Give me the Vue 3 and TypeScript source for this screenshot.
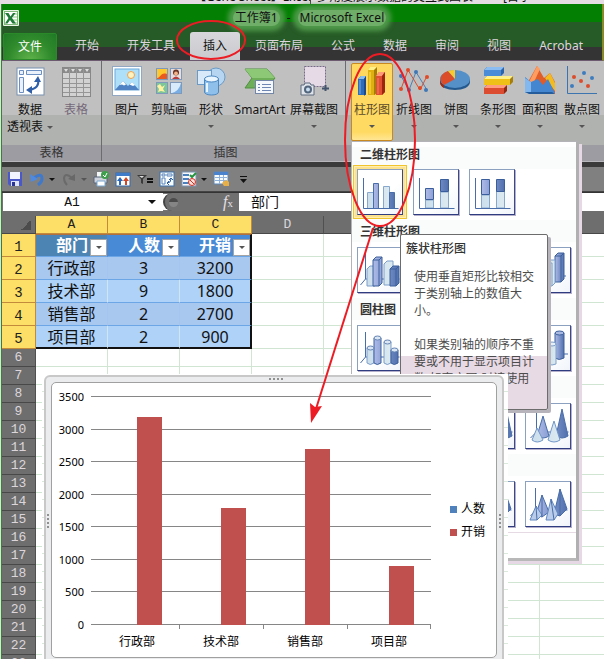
<script setup lang="ts">
import { ref } from 'vue'

interface Command {
  id: string
  label: string
  second?: string
  arrow?: boolean
  width: string
  disabled?: boolean
}
interface Group {
  name: string
  cls: string
  items: Command[]
}

const activeTab = ref('插入')
const nameBox = ref('A1')
const formula = ref('部门')

const tabs: string[] = ['开始', '开发工具', '插入', '页面布局', '公式', '数据', '审阅', '视图', 'Acrobat']

const groups: Group[] = [
  {
    name: '表格',
    cls: 'g-table',
    items: [
      { id: 'pivot', label: '数据', second: '透视表', arrow: true, width: 'w56' },
      { id: 'table', label: '表格', width: 'w36', disabled: true },
    ],
  },
  {
    name: '插图',
    cls: 'g-illus',
    items: [
      { id: 'picture', label: '图片', width: 'w42' },
      { id: 'clip', label: '剪贴画', width: 'w42' },
      { id: 'shapes', label: '形状', arrow: true, width: 'w42' },
      { id: 'smart', label: 'SmartArt', width: 'w56' },
      { id: 'shot', label: '屏幕截图', arrow: true, width: 'w52' },
    ],
  },
  {
    name: '',
    cls: 'g-chart',
    items: [
      { id: 'column', label: '柱形图', arrow: true, width: 'w42' },
      { id: 'line', label: '折线图', arrow: true, width: 'w42' },
      { id: 'pie', label: '饼图', arrow: true, width: 'w42' },
      { id: 'hbar', label: '条形图', arrow: true, width: 'w42' },
      { id: 'area', label: '面积图', arrow: true, width: 'w42' },
      { id: 'scatter', label: '散点图', arrow: true, width: 'w42' },
    ],
  },
]

const columns: string[] = ['A', 'B', 'C', 'D', 'E', 'F', 'G', 'H']
const fields: string[] = ['部门', '人数', '开销']
const records: string[][] = [
  ['行政部', '3', '3200'],
  ['技术部', '9', '1800'],
  ['销售部', '2', '2700'],
  ['项目部', '2', '900'],
]
const emptyRows: number[] = Array.from({ length: 18 }, (_, i) => i + 6)

interface Section {
  title: string
  tiles: string[]
}
const sections: Section[] = [
  { title: '二维柱形图', tiles: ['cluster', 'stack', 'full'] },
  { title: '三维柱形图', tiles: ['cube', 'cube', 'cube', 'cubeRow'] },
  { title: '圆柱图', tiles: ['cyl', 'cyl', 'cyl', 'cylRow'] },
  { title: '', tiles: ['cone', 'cone', 'cone', 'cone'] },
  { title: '', tiles: ['pyr', 'pyr', 'pyr', 'pyr'] },
]

const ticks: number[] = [3500, 3000, 2500, 2000, 1500, 1000, 500, 0]
const baseline = 242
const scaleY = (v: number): number => Math.round(baseline - (v * 228) / 3500)
const barX: number[] = [85, 169, 253, 337]
</script>

<template>
  <div class="page">
    <div class="behind" aria-hidden="true">
      <span class="b1">【Gene Sheet】Excel</span>
      <span class="b2">多角度展示数据的交互式图表</span>
      <span class="b3">[首字</span>
    </div>
    <div class="window">
      <header class="top">
        <div class="titlebar">
          <svg class="logo" width="16" height="16" viewBox="0 0 16 16">
            <rect width="16" height="16" rx="1" fill="#e9f3e6" />
            <rect x="1.500" y="1.500" width="13" height="13" fill="#fff" stroke="#7fb878" />
            <path d="M10 4h4M10 7h4M10 10h4M10 13h4" stroke="#8fca86" />
            <path d="M2 3h3.500l2 3.500L10 3h2.500L9 8l4 5.500H9.500L7 10l-2.500 3.500H2L5.500 8z" fill="#1f7a37" />
          </svg>
          <h1><span class="glow">工作簿1</span><span>-</span><span class="glow">Microsoft Excel</span></h1>
        </div>
        <nav class="tabs">
          <button type="button" class="file">文件</button>
          <button v-for="t in tabs" :key="t" type="button" class="tab" :class="{ active: t === activeTab }" @click="activeTab = t">{{ t }}</button>
        </nav>
      </header>

      <div class="ribbon">
        <section v-for="g in groups" :key="g.cls" class="group" :class="g.cls">
          <div class="commands">
            <button v-for="c in g.items" :key="c.id" type="button" class="cmd" :class="[c.width, { open: c.id === 'column' }]" :disabled="c.disabled">
              <svg width="32" height="32" viewBox="0 0 32 32">
                <g v-if="c.id === 'pivot'">
                  <rect x="3" y="3" width="27" height="27" fill="#fff" stroke="#7590b0" />
                  <path d="M5.500 5.500h4v4h-4zM12.500 5.500h15v4h-15zM5.500 12.500h4v15h-4z" fill="#eaf1fa" stroke="#6b8fc0" />
                  <path d="M24 15q2 8-9 10" fill="none" stroke="#2f5fa8" stroke-width="2" />
                  <path d="M24 11l-4 6h7zM12 25l6-4v8z" fill="#2f5fa8" />
                </g>
                <g v-else-if="c.id === 'table'">
                  <rect x="2.500" y="2.500" width="28" height="29" fill="#d2d2d2" stroke="#888" />
                  <rect x="3" y="3" width="27" height="5" fill="#8a8a8a" />
                  <path d="M9.500 3v28M16.500 3v28M23.500 3v28M3 13.500h27M3 18.500h27M3 22.500h27M3 27.500h27" stroke="#969696" />
                  <path d="M4 4h4l-2 3zM11 4h4l-2 3zM18 4h4l-2 3zM25 4h4l-2 3z" fill="#ddd" />
                </g>
                <g v-else-if="c.id === 'picture'">
                  <rect x="1.500" y="1.500" width="29" height="29" fill="#fff" stroke="#92a8c2" />
                  <rect x="4" y="4" width="24" height="21" fill="#aee0fa" stroke="#6da8d8" />
                  <circle cx="20" cy="10" r="3.500" fill="#fff3c0" stroke="#f0a050" />
                  <path d="M4 25l8-9 5 5 4-4 7 8z" fill="#4f83c4" />
                  <path d="M8.500 20l3.500-4 3 3.500-2 1-2-1zM18.500 19.500L21 17l3 3-2 1z" fill="#fff" />
                </g>
                <g v-else-if="c.id === 'clip'">
                  <rect x="3.500" y="3.500" width="11" height="11" fill="#ffc72e" stroke="#7f99ba" />
                  <path d="M4 13c4 0 3-6 10-4v5H4z" fill="#e85a20" />
                  <rect x="17.500" y="3.500" width="11" height="11" fill="#e8dfdc" stroke="#7f99ba" />
                  <circle cx="23" cy="7.500" r="3" fill="#6a3424" /><circle cx="23" cy="8.500" r="2" fill="#f2b488" />
                  <path d="M19 14q4-5 8 0z" fill="#b83c3c" />
                  <rect x="3.500" y="17.500" width="11" height="11" fill="#7cc69a" stroke="#7f99ba" />
                  <path d="M7 19l2 3 3-2-2 4 2 3-4-1-3 1 1-3-2-3z" fill="#fff3a0" />
                  <rect x="17.500" y="17.500" width="11" height="11" fill="#d8ebfa" stroke="#7f99ba" />
                  <path d="M28 18v10H19q7-2 9-10z" fill="#78aee4" />
                </g>
                <g v-else-if="c.id === 'shapes'">
                  <circle cx="21" cy="12" r="9" fill="#b5d5f0" stroke="#6a9bc8" />
                  <rect x="2.500" y="5.500" width="14" height="14" fill="#d8eaf9" stroke="#6a9bc8" />
                  <path d="M9.500 14v13c0 4 14 4 14 0V14z" fill="#8fc0ec" stroke="#4d88c0" />
                  <ellipse cx="16.500" cy="14" rx="7" ry="3" fill="#e9f5ff" stroke="#4d88c0" />
                  <path d="M12 18v9" stroke="#e8f5ff" stroke-width="2" />
                </g>
                <g v-else-if="c.id === 'smart'">
                  <path d="M1 4h22l8 9-8 10H1l7-10z" fill="#6fae58" stroke="#4f9040" />
                  <path d="M1 4h22l8 9H8z" fill="#8cc876" />
                  <rect x="11.500" y="15.500" width="18" height="13" fill="#f4f7fc" stroke="#7486a8" />
                  <path d="M14 19.500h2M18 19.500h9M14 22.500h2M18 22.500h9M14 25.500h2M18 25.500h9" stroke="#6d86b4" />
                </g>
                <g v-else-if="c.id === 'shot'">
                  <rect x="6.500" y="1.500" width="21" height="20" fill="#e6dae6" stroke="#776a88" stroke-dasharray="2 1" />
                  <path d="M27.500 20v6M24 23.500h7" stroke="#44546c" stroke-width="2" />
                  <path d="M3 20h3l1-2h5l1 2h3v10H3z" fill="#dfe4ea" stroke="#5c6a7c" />
                  <circle cx="10" cy="24.500" r="4" fill="#52657c" /><circle cx="10" cy="24.500" r="2" fill="#c9ddf0" />
                </g>
                <g v-else-if="c.id === 'column'">
                  <path d="M2 14l3-3h5v19H2z" fill="#2f6db8" /><path d="M2 14l3-3h5l-2 3z" fill="#8abcf0" /><path d="M8 14l2-3v18l-2 2z" fill="#1c4a8c" />
                  <path d="M12 5l2-3h7v25l-2 3h-7z" fill="#e0b010" /><path d="M12 5l2-3h7l-2 3z" fill="#fff08a" /><path d="M18 5l3-3v26l-3 2z" fill="#a87c08" />
                  <path d="M20 11l3-4h6v20l-3 3h-6z" fill="#e05030" /><path d="M20 11l3-4h6l-3 4z" fill="#ff9a78" /><path d="M26 11l3-4v20l-3 3z" fill="#9c2410" />
                  <path d="M4 15v14" stroke="#78aeea" /><path d="M14 7v22" stroke="#ffe45a" /><path d="M22 13v16" stroke="#f08464" />
                </g>
                <g v-else-if="c.id === 'line'">
                  <path d="M3 11l8 14 7-18 11 18" fill="none" stroke="#4a80b8" />
                  <path d="M3 24l7-19 12 20 7-14" fill="none" stroke="#d4502e" />
                  <g fill="#3f78b4"><circle cx="3" cy="11" r="2" /><circle cx="11" cy="25" r="2" /><circle cx="18" cy="7" r="2" /><circle cx="28" cy="25" r="2" /></g>
                  <g fill="#e04a28"><circle cx="3" cy="24" r="2" /><circle cx="10" cy="5" r="2" /><circle cx="22" cy="23" r="2" /><circle cx="29" cy="12" r="2" /></g>
                </g>
                <g v-else-if="c.id === 'pie'">
                  <path d="M0 14v3c0 5 7 8 15 8s15-3 15-8v-3z" fill="#24598f" />
                  <ellipse cx="15" cy="14" rx="15" ry="9" fill="#5590c8" />
                  <path d="M15 14L4 20C-2 15 0 9 8 6z" fill="#dc4c28" />
                  <path d="M15 14L8 6q3-1 7-1z" fill="#f7ca30" />
                  <path d="M0 14q0 4 4 6v3Q0 21 0 17z" fill="#9c2c14" />
                </g>
                <g v-else-if="c.id === 'hbar'">
                  <path d="M2 5l3-3h17v6l-3 3H2z" fill="#2c64ac" /><path d="M2 5l3-3h17l-3 3z" fill="#8cbdf2" /><path d="M2 5h17v6H2z" fill="#4a8cd8" />
                  <path d="M2 14l3-3h26v6l-3 3H2z" fill="#a67e08" /><path d="M2 14l3-3h26l-3 3z" fill="#fff08c" /><path d="M2 14h26v6H2z" fill="#efc018" />
                  <path d="M2 23l3-3h20v6l-3 3H2z" fill="#952610" /><path d="M2 23l3-3h20l-3 3z" fill="#ff9c80" /><path d="M2 23h20v6H2z" fill="#dc4c30" />
                </g>
                <g v-else-if="c.id === 'area'">
                  <path d="M4 17L13 1l7 12 6-5 5 9v12z" fill="#e05c28" /><path d="M13 1l3 3-6 13H5z" fill="#ff9c60" />
                  <path d="M21 13l5-5 5 10v8z" fill="#f2bc20" />
                  <path d="M1 27V12l6 5 7-3 5 6 5-6 7 14z" fill="#4486d0" /><path d="M1 13l6 4v11H1z" fill="#82b8ee" />
                  <path d="M1 27h27l3 2H5z" fill="#255c9c" />
                </g>
                <g v-else-if="c.id === 'scatter'">
                  <path d="M1.500 1v27.500H31" fill="none" stroke="#3c74b0" />
                  <g fill="#dc4c2c"><circle cx="8" cy="12" r="2" /><circle cx="15" cy="16" r="2" /><circle cx="22" cy="21" r="2" /></g>
                  <g fill="#3f7cbe"><circle cx="6" cy="21" r="2" /><circle cx="18" cy="8" r="2" /><circle cx="26" cy="13" r="2" /></g>
                </g>
              </svg>
              <span class="lbl">{{ c.label }}</span>
              <span v-if="c.second" class="lbl second">{{ c.second }}<i class="caret"></i></span>
              <i v-else-if="c.arrow" class="caret under"></i>
            </button>
          </div>
          <div class="gname">{{ g.name }}</div>
        </section>
      </div>

      <div class="qat">
        <button type="button" aria-label="保存"><svg width="16" height="16" viewBox="0 0 16 16"><path d="M1 1h14v14H3l-2-2z" fill="#4a58c8" /><path d="M3 1h10v7H3z" fill="#f2f5ff" /><path d="M4 10h8v5H4z" fill="#dfe4f4" /><path d="M5 11h3v4H5z" fill="#2a3494" /></svg></button>
        <button type="button" class="wide" aria-label="撤消"><svg width="16" height="16" viewBox="0 0 16 16"><path d="M5 7q8-6 8 1 0 3-4 6" fill="none" stroke="#3f79cc" stroke-width="3" /><path d="M1 3l1 8 7-3z" fill="#4e8ae0" /></svg><i class="caret dark"></i></button>
        <button type="button" class="wide" aria-label="恢复" disabled><svg width="16" height="16" viewBox="0 0 16 16"><path d="M11 7Q4 1 3 7q0 4 3 7" fill="none" stroke="#6a6a6a" stroke-width="2" /><path d="M14 3v7l-7-2z" fill="#686868" /></svg><i class="caret"></i></button>
        <button type="button" aria-label="打印"><svg width="16" height="16" viewBox="0 0 16 16"><path d="M4 1h7v6H4z" fill="#f4f6fa" /><path d="M1 6h13v6H1z" fill="#cfd4dc" stroke="#586478" /><path d="M4 10h8v5H4z" fill="#fff" stroke="#7ba6d0" /><circle cx="12" cy="4" r="4" fill="#3f9f4c" /><path d="M10 4l2 2 2-4" fill="none" stroke="#fff" /></svg></button>
        <button type="button" aria-label="排序"><svg width="16" height="16" viewBox="0 0 16 16"><rect x="1" y="2" width="14" height="13" fill="#fff" stroke="#3568ac" /><path d="M1 2h14v3H1z" fill="#3f7bc8" /><path d="M5 9v5" stroke="#2a66b8" stroke-width="2" /><path d="M2 10h6L5 6z" fill="#2a66b8" /><path d="M11 9v5" stroke="#d04828" stroke-width="2" /><path d="M8 10h6l-3-4z" fill="#d04828" /></svg></button>
        <button type="button" aria-label="筛选"><svg width="16" height="16" viewBox="0 0 16 16"><path d="M0 4h10L6 8v5l-2-1V8z" fill="#3a3a3a" /><path d="M2 5h5L5 7z" fill="#ddd" /><path d="M10 8h6M10 11h6" stroke="#111" stroke-width="2" /></svg></button>
        <button type="button" aria-label="数据透视表"><svg width="16" height="16" viewBox="0 0 16 16"><rect x="1" y="1" width="14" height="14" fill="#f8fbff" stroke="#3a70ac" /><path d="M3 3h3v2H3zM8 3h5v2H8zM3 7h3v6H3z" fill="#fff" stroke="#5482b8" /><path d="M12 8q0 4-4 4M10 9l2-2 2 2M10 10l-2 2 2 2" fill="none" stroke="#2c5fa0" /></svg></button>
        <button type="button" class="wide" aria-label="数据有效性"><svg width="16" height="16" viewBox="0 0 16 16"><rect x="1" y="1" width="14" height="14" fill="#f6f8fc" stroke="#7a94b4" /><path d="M2 4h6M2 8h6M2 12h6" stroke="#4b80bc" stroke-width="2" /><path d="M9 4l2 2 4-4" fill="none" stroke="#26943c" stroke-width="2" /><circle cx="11" cy="11" r="3.500" fill="#ffe0da" stroke="#d83020" /><path d="M9 9l4 4" stroke="#d83020" /></svg><i class="caret dark"></i></button>
        <button type="button" aria-label="表格属性"><svg width="16" height="16" viewBox="0 0 16 16"><rect x="1" y="1" width="14" height="12" fill="#f8fbff" stroke="#5e86b4" /><path d="M1 1h14v3H1z" fill="#4b84cc" /><path d="M2 6.500h12M2 9.500h12M6.500 4v9M10.500 4v9" stroke="#8eb2dc" /><path d="M9 12q4-5 7-1v4h-5z" fill="#e8b048" /></svg></button>
        <button type="button" class="more" aria-label="自定义"><svg width="10" height="10" viewBox="0 0 10 10"><path d="M2 2h7v1H2zM2 5h7L5.500 9z" fill="#111" /></svg></button>
      </div>

      <div class="fbar">
        <label class="namebox"><input v-model="nameBox" aria-label="名称框" /></label>
        <button type="button" class="nb-drop" aria-label="名称列表"><i class="caret dark"></i></button>
        <div class="fx"><span class="knob"></span><button type="button"><em>f</em><sub>x</sub></button></div>
        <input v-model="formula" class="formula" aria-label="编辑栏" />
      </div>

      <div class="sheet">
        <table>
          <colgroup><col class="c-head" /><col v-for="c in columns" :key="c" class="c-col" /></colgroup>
          <thead>
            <tr>
              <th class="corner"><i></i></th>
              <th v-for="(c, i) in columns" :key="c" :class="{ sel: i < 3 }">{{ c }}</th>
            </tr>
          </thead>
          <tbody>
            <tr class="big fields">
              <th class="sel">1</th>
              <td v-for="f in fields" :key="f"><div class="fcell"><span>{{ f }}</span><button type="button" :aria-label="'筛选' + f"><i class="caret"></i></button></div></td>
              <td v-for="n in 5" :key="n" class="blank"></td>
            </tr>
            <tr v-for="(r, i) in records" :key="r[0]" class="big data">
              <th class="sel">{{ i + 2 }}</th>
              <td v-for="v in r" :key="v">{{ v }}</td>
              <td v-for="n in 5" :key="n" class="blank"></td>
            </tr>
            <tr v-for="n in emptyRows" :key="n">
              <th>{{ n }}</th>
              <td v-for="c in columns" :key="c" class="blank"></td>
            </tr>
          </tbody>
        </table>
      </div>
    </div>

    <div class="menu">
      <section v-for="(s, i) in sections" :key="i">
        <h2>{{ s.title }}</h2>
        <div class="tiles">
          <button v-for="(t, j) in s.tiles" :key="j" type="button" class="tile" :class="{ hot: i === 0 && j === 0 }">
            <svg width="44" height="44" viewBox="0 0 44 44">
              <defs>
                <linearGradient id="deep" x1="0" x2="1"><stop offset="0" stop-color="#aebbe8" /><stop offset="1" stop-color="#5070ae" /></linearGradient>
                <linearGradient id="pale" x1="0" x2="1"><stop offset="0" stop-color="#cbdfec" /><stop offset="1" stop-color="#dce9f0" /></linearGradient>
              </defs>
              <g v-if="t === 'cluster'">
                <path d="M9.500 22.500h6v16h-6zM25.500 16.500h6v22h-6z" fill="url(#pale)" stroke="#87a8cc" />
                <path d="M15.500 13.500h5v25h-5zM31.500 22.500h5v16h-5z" fill="url(#deep)" stroke="#496da8" />
                <path d="M5.500 8v30.500h35" fill="none" stroke="#496da8" />
              </g>
              <g v-else-if="t === 'stack'">
                <path d="M11.500 30h8v8h-8zM26.500 22h8v16h-8z" fill="url(#pale)" stroke="#87a8cc" />
                <path d="M11.500 18.500h8v11h-8zM26.500 9.500h8v12h-8z" fill="url(#deep)" stroke="#3a5e9c" />
                <path d="M5.500 8v30.500h35" fill="none" stroke="#496da8" />
              </g>
              <g v-else-if="t === 'full'">
                <path d="M11.500 25h8v13h-8zM26.500 21h8v17h-8z" fill="url(#pale)" stroke="#87a8cc" />
                <path d="M11.500 9.500h8v15h-8zM26.500 9.500h8v12h-8z" fill="url(#deep)" stroke="#3a5e9c" />
                <path d="M5.500 8v30.500h35" fill="none" stroke="#496da8" />
              </g>
              <g v-else-if="t === 'cube'">
                <path d="M7.500 6v25l-5 6M7.500 31h34" fill="none" stroke="#496da8" />
                <path d="M9 21l3-3h5v20H9zM26 16l3-3h6v24h-9z" fill="url(#pale)" stroke="#7e9fca" />
                <path d="M15 12l3-3h6v26l-3 3h-6zM32 21l3-3h6v17l-3 3h-6z" fill="url(#deep)" stroke="#3d609c" />
                <path d="M15 12h6v26M21 12l3-3M32 21h6v17M38 21l3-3" fill="none" stroke="#3d609c" />
              </g>
              <g v-else-if="t === 'cubeRow'">
                <path d="M2 28h38" stroke="#496da8" />
                <path d="M29 8l3-3h6v26l-3 3h-6z" fill="url(#deep)" stroke="#3d609c" /><path d="M29 8h6v26M35 8l3-3" fill="none" stroke="#3d609c" />
                <path d="M20 15l3-3h6v23l-3 3h-6z" fill="url(#pale)" stroke="#7e9fca" /><path d="M20 15h6v23" fill="none" stroke="#7e9fca" />
              </g>
              <g v-else-if="t === 'cyl'">
                <path d="M7.500 6v25l-5 6M7.500 31h34" fill="none" stroke="#496da8" />
                <path d="M9 22v15q3 3 7 0V22zM26 16v21q3 3 7 0V16z" fill="url(#pale)" stroke="#7e9fca" />
                <path d="M16 12v25q3 3 7 0V12zM33 24v13q3 3 7 0V24z" fill="url(#deep)" stroke="#3d609c" />
                <g fill="#dae6f3" stroke="#6585b4"><ellipse cx="12.500" cy="22" rx="3.500" ry="2" /><ellipse cx="29.500" cy="16" rx="3.500" ry="2" /><ellipse cx="19.500" cy="12" rx="3.500" ry="2" /><ellipse cx="36.500" cy="24" rx="3.500" ry="2" /></g>
              </g>
              <g v-else-if="t === 'cylRow'">
                <path d="M2 28h40" stroke="#496da8" />
                <path d="M29 7v25q4 3 9 0V7z" fill="url(#deep)" stroke="#3d609c" /><ellipse cx="33.500" cy="7" rx="4.500" ry="2" fill="#a8b8e0" stroke="#3d609c" />
                <path d="M22 18v20q4 2 8 0V18z" fill="url(#pale)" stroke="#7e9fca" /><ellipse cx="26" cy="18" rx="4" ry="2" fill="#e6f0f8" stroke="#7e9fca" />
              </g>
              <g v-else-if="t === 'cone'">
                <path d="M10.500 5v23l-6 6M10.500 28h32" fill="none" stroke="#496da8" />
                <path d="M17 12l-6 20q6 4 12 0zM36 5l-6 27q6 4 12 0z" fill="url(#deep)" stroke="#496da8" />
                <path d="M11 24L6 36q5 4 11 0zM28 17l-6 19q6 4 12 0z" fill="url(#pale)" stroke="#7297c8" />
              </g>
              <g v-else>
                <path d="M9.500 6v22l-5 6M9.500 28h32" fill="none" stroke="#496da8" />
                <path d="M16 13l-6 20 6 2 7-5zM34 7l-6 25 6 2 7-7z" fill="url(#deep)" stroke="#496da8" />
                <path d="M10 24L4 38h7l5-5zM25 17l-5 21h8l4-6z" fill="#b9cdea" stroke="#6288c0" />
                <path d="M10 24l1 14M25 17l3 21M16 13v22M34 7v27" stroke="#496da8" fill="none" />
              </g>
            </svg>
          </button>
        </div>
      </section>
      <div class="menu-foot"></div>
    </div>

    <div class="tooltip" role="tooltip">
      <strong>簇状柱形图</strong>
      <p>使用垂直矩形比较相交于类别轴上的数值大小。</p>
      <p>如果类别轴的顺序不重要或不用于显示项目计数(如直方图)时请使用</p>
    </div>

    <div class="chart">
      <div class="frame">
        <i class="grip top-grip"></i><i class="grip left-grip"></i><i class="grip right-grip"></i>
        <div class="plot">
          <svg width="444" height="275" viewBox="0 0 444 275">
            <g v-for="t in ticks" :key="t">
              <path :d="`M39 ${scaleY(t) - 0.5}h340`" stroke="#868686" />
              <text x="32" :y="scaleY(t) + 4" text-anchor="end" class="axis">{{ t }}</text>
            </g>
            <path d="M127.500 242v4M211.500 242v4M295.500 242v4M378.500 242v4" stroke="#868686" />
            <g v-for="(r, i) in records" :key="r[0]">
              <rect :x="barX[i]" :y="scaleY(Number(r[2]))" width="25" :height="baseline - scaleY(Number(r[2]))" fill="#c0504d" />
              <text :x="barX[i]" y="263" text-anchor="middle" class="cat">{{ r[0] }}</text>
            </g>
            <rect x="398" y="123" width="7" height="7" fill="#4f81bd" />
            <text x="409" y="130" class="cat">人数</text>
            <rect x="398" y="146" width="7" height="7" fill="#c0504d" />
            <text x="409" y="153" class="cat">开销</text>
          </svg>
        </div>
      </div>
    </div>

    <svg class="ink" width="604" height="659" viewBox="0 0 604 659" aria-hidden="true">
      <g fill="none" stroke="#ed1c24" stroke-width="2">
        <ellipse cx="211" cy="40" rx="34" ry="19" />
        <ellipse cx="380" cy="140" rx="35" ry="86" />
        <path d="M373 228L315 412" />
      </g>
      <path d="M311 423l-1-20 5 4 7-1z" fill="#ed1c24" />
    </svg>
  </div>
</template>

<style>
body {
  margin: 0;
  background: #fff;
}
</style>

<style scoped>
* {
  box-sizing: border-box;
}
.page {
  position: relative;
  display: flex;
  flex-direction: column;
  height: 100vh;
  overflow: hidden;
  font: 12px/16px 'Noto Sans', 'Noto Sans CJK SC', sans-serif;
  color: #111;
  background: #e6dce4;
}
button {
  font: inherit;
  color: inherit;
  padding: 0;
  margin: 0;
  border: 0;
  background: none;
}
input {
  font: inherit;
  color: inherit;
  border: 0;
  padding: 0;
  background: none;
  min-width: 0;
}
.behind {
  flex: none;
  display: flex;
  align-items: flex-end;
  height: 4px;
  overflow: hidden;
  padding-left: 194px;
  white-space: nowrap;
  line-height: 14px;
}
.b1 {
  width: 117px;
  overflow: hidden;
  border-right: 1px solid #444;
  margin-right: 6px;
}
.b3 {
  margin-left: 30px;
}
.window {
  flex: 1;
  min-height: 0;
  display: flex;
  flex-direction: column;
  margin-left: 1px;
  border-left: 1px solid #2c8a2c;
}
.top {
  flex: none;
  display: flex;
  flex-direction: column;
  height: 57px;
  background: linear-gradient(#038003 0 18px, #265a26 18px 43px, #343434 43px);
  border-right: 2px solid #8a8a28;
  border-bottom: 1px solid #6d5a70;
}
.titlebar {
  display: flex;
  align-items: center;
  height: 29px;
  padding: 0 2px 0 1px;
}
.logo {
  flex: none;
}
h1 {
  flex: 1;
  display: flex;
  justify-content: center;
  gap: 7px;
  margin: 0;
  font-size: 12px;
  font-weight: 400;
  line-height: 16px;
}
.glow {
  padding: 0 2px;
  border-radius: 8px;
  background: #6fae68;
  box-shadow: 0 0 5px 5px #4f9a4a;
}
.tabs {
  display: flex;
  height: 28px;
  padding-left: 1px;
}
.file {
  width: 54px;
  height: 27px;
  margin: 1px 4px 0 0;
  color: #fff;
  border: 1px solid #2a8a2a;
  border-radius: 2px 2px 0 0;
  background: radial-gradient(ellipse at 50% 110%, #62b44c, #2f8a2c 60%, #1f7a26);
}
.tab {
  padding: 0 14px;
  color: #ddd6dd;
}
.tab.active {
  margin: 0 1px;
  padding: 0 13px;
  color: #111;
  background: linear-gradient(#d8d8dc, #cacace);
  border-radius: 3px 3px 0 0;
}
.ribbon {
  flex: none;
  display: flex;
  height: 101px;
  overflow: hidden;
  background: linear-gradient(#c0c0c0 0 54px, #b0b2b0 54px 84px, #9c9ca2 84px);
  border-bottom: 1px solid #b8b8bc;
}
.group {
  flex: none;
  display: flex;
  flex-direction: column;
  border-right: 1px solid #6c6c70;
}
.g-table {
  width: 100px;
}
.g-illus {
  width: 244px;
  padding-left: 4px;
}
.g-chart {
  flex: 1;
  padding-left: 5px;
  border: 0;
}
.commands {
  display: flex;
  height: 84px;
  padding-top: 2px;
}
.cmd {
  flex: none;
  display: flex;
  flex-direction: column;
  align-items: center;
  height: 78px;
  padding-top: 2px;
  white-space: nowrap;
  border-radius: 2px;
}
.cmd svg {
  flex: none;
}
.cmd:disabled {
  color: #75697a;
}
.w36 { width: 36px; }
.w42 { width: 42px; }
.w52 { width: 52px; }
.w56 { width: 56px; }
.lbl {
  margin-top: 5px;
  line-height: 16px;
}
.second {
  display: flex;
  align-items: center;
  gap: 4px;
  margin-top: 1px;
}
.open {
  color: #5a4a2a;
  border: 1px solid #c88a20;
  padding-top: 1px;
  background: linear-gradient(#ffd860 0, #ffda62 68px, #ffe9a0 78px);
}
.gname {
  height: 16px;
  text-align: center;
  color: #333;
  line-height: 15px;
}
.caret {
  display: inline-block;
  width: 0;
  height: 0;
  border: 3px solid transparent;
  border-top-color: #555;
  border-bottom: 0;
}
.caret.dark {
  border-top-color: #111;
}
.under {
  margin-top: 7px;
}
.qat {
  flex: none;
  display: flex;
  align-items: center;
  gap: 6px;
  height: 30px;
  padding: 0 5px;
  background: #808080;
  border-top: 5px solid #3a3a3a;
  border-bottom: 1px solid #444;
}
.qat button {
  display: flex;
  align-items: center;
  gap: 4px;
}
.more {
  margin-left: 3px;
}
.fbar {
  flex: none;
  display: flex;
  height: 24px;
  padding-left: 1px;
  background: #747474;
  border-top: 1px solid #333;
  border-bottom: 5px solid #6e6e6e;
  font-size: 14px;
}
.namebox {
  display: flex;
  width: 138px;
  background: #fff;
}
.namebox input {
  width: 100%;
  text-align: center;
  font: 13px 'Liberation Mono', monospace;
}
.nb-drop {
  display: grid;
  place-items: center;
  width: 22px;
  background: #fff;
}
.nb-drop .caret {
  border-width: 4px;
  border-bottom: 0;
}
.fx {
  width: 76px;
  display: flex;
  align-items: center;
  justify-content: space-between;
  padding: 0 6px 0 4px;
  border-radius: 9px 0 0 9px;
  background: #707070;
  border-left: 2px solid #444;
  box-shadow: -8px 0 0 -1px #fff;
}
.knob {
  width: 9px;
  height: 9px;
  border-radius: 5px;
  background: linear-gradient(#4a4a4a 50%, #858585 50%);
}
.fx button {
  font: 16px/16px 'Liberation Serif', serif;
  color: #e6e0e6;
}
.fx sub {
  font-size: 11px;
  vertical-align: baseline;
}
.formula {
  flex: 1;
  background: #fff;
  padding-left: 12px;
}
.sheet {
  flex: 1;
  min-height: 0;
  overflow: hidden;
  background: #fff;
}
table {
  table-layout: fixed;
  width: 610px;
  border-collapse: separate;
  border-spacing: 0;
}
.c-head { width: 34px; }
.c-col { width: 72px; }
th {
  height: 18px;
  padding: 0;
  font: 13px/16px 'Liberation Mono', monospace;
  color: #dcd6dc;
  background: #6e6e6e;
  border-right: 1px solid #505050;
  border-bottom: 1px solid #484848;
}
th.sel {
  color: #222;
  background: #fdde66;
  border-color: #c48a3c;
}
.corner i {
  display: block;
  margin: 0 4px 0 auto;
  width: 10px;
  height: 10px;
  background: linear-gradient(135deg, transparent 50%, #4c4c4c 50%);
}
.big th {
  height: 23px;
  padding-top: 4px;
  font-size: 14px;
  line-height: 18px;
}
td {
  padding: 0;
  text-align: center;
  font-size: 16px;
  line-height: 20px;
  background: #a8c8f0;
  border-right: 1px solid #a4c6ee;
  border-bottom: 1px solid #6ca6e6;
}
tr:nth-child(odd) td {
  background-color: #aed2f8;
  border-right-color: #d0e6ee;
}
.fields td {
  color: #fff;
  font-weight: 700;
  background-color: #488ad6 !important;
  border-right-color: #488ad6 !important;
  border-top: 1px solid #b07040;
}
.fields td:nth-child(2) {
  background-color: #4c84b4 !important;
}
td:nth-child(4) {
  border-right: 2px solid #111 !important;
}
.data:nth-child(5) td {
  border-bottom: 2px solid #111;
}
td.blank,
tr:nth-child(odd) td.blank,
.fields td.blank,
.data:nth-child(5) td.blank {
  background-color: #fff !important;
  border: 0 !important;
  border-right: 1px solid #d0e6d2 !important;
  border-bottom: 1px solid #d0e6d2 !important;
}
.fcell {
  display: flex;
  justify-content: flex-end;
  align-items: flex-start;
  gap: 2px;
  height: 20px;
  line-height: 18px;
}
.fcell button {
  display: grid;
  place-items: center;
  width: 17px;
  height: 17px;
  margin-top: 3px;
  background: #fff;
  border: 1px solid #a4a4a4;
}
.menu {
  position: absolute;
  left: 351px;
  top: 141px;
  width: 228px;
  background: #fff;
  border: 1px solid #b4b4b8;
  border-right: 3px solid #b0b0b0;
  border-bottom: 3px solid #b8b8b8;
  box-shadow: 3px 3px 0 #e6d8e4;
}
.menu h2 {
  margin: 0;
  height: 32px;
  padding: 6px 8px 0;
  font-size: 12px;
  line-height: 22px;
  font-weight: 700;
  color: #333;
  background: linear-gradient(#fff 0 5px, #fafcfb 5px 27px, #fff 27px);
}
.menu section:first-child h2 {
  height: 27px;
  padding-top: 2px;
}
.tiles {
  display: flex;
  gap: 10px;
  padding-left: 5px;
}
.tile {
  flex: none;
  width: 46px;
  height: 46px;
  background: linear-gradient(135deg, #fff 60%, #f0f4fa);
  border: 1px solid #8ca0c0;
  border-right-color: #3a4a88;
  border-bottom-color: #303c80;
  box-shadow: 1px 1px 0 #b4b0cc;
}
.tile svg {
  display: block;
}
.tile.hot {
  box-shadow: 0 0 0 2px #fce28c, 0 0 0 3px #ffedb0, 0 0 0 4px #f0c42c;
}
.menu-foot {
  height: 26px;
  margin-top: 5px;
  border-top: 1px solid #e6dae4;
}
.tooltip {
  position: absolute;
  left: 400px;
  top: 234px;
  width: 148px;
  height: 176px;
  padding: 5px;
  color: #4c4c4c;
  border: 1px solid #6c6c6c;
  border-radius: 2px;
  background: linear-gradient(#fff 0 121px, #e8dae4 121px);
  box-shadow: 3px 3px 0 #b8b4bc;
  line-height: 17px;
}
.tooltip strong {
  display: block;
  font-size: 12px;
  font-weight: 500;
  color: #333;
  margin-bottom: 11px;
}
.tooltip p {
  width: 122px;
  margin: 0 0 17px 8px;
}
.chart {
  position: absolute;
  left: 42px;
  top: 374px;
  width: 466px;
  bottom: 0;
  padding: 1px 4px 0 2px;
  background: repeating-linear-gradient(#fff 0 17px, #dbe9dd 17px 18px);
  overflow: hidden;
}
.frame {
  position: relative;
  height: 300px;
  padding: 5px 5px 0;
  border: 2px solid #c8c8c8;
  border-radius: 6px 6px 0 0;
  background: #eaeced;
}
.plot {
  height: 276px;
  overflow: hidden;
  background: #fff;
  border: 1px solid #a0a0a0;
  border-radius: 5px;
}
.plot svg {
  display: block;
}
.axis {
  font-size: 11px;
}
.cat {
  font-size: 12px;
}
.grip {
  position: absolute;
  background: radial-gradient(circle, #909090 1px, transparent 1px) 0 0 / 4px 4px;
}
.top-grip {
  left: 222px;
  top: 0;
  width: 16px;
  height: 4px;
}
.left-grip,
.right-grip {
  top: 136px;
  width: 4px;
  height: 16px;
}
.left-grip {
  left: 0;
}
.right-grip {
  right: 0;
}
.ink {
  position: absolute;
  left: 0;
  top: 0;
  pointer-events: none;
}
</style>
